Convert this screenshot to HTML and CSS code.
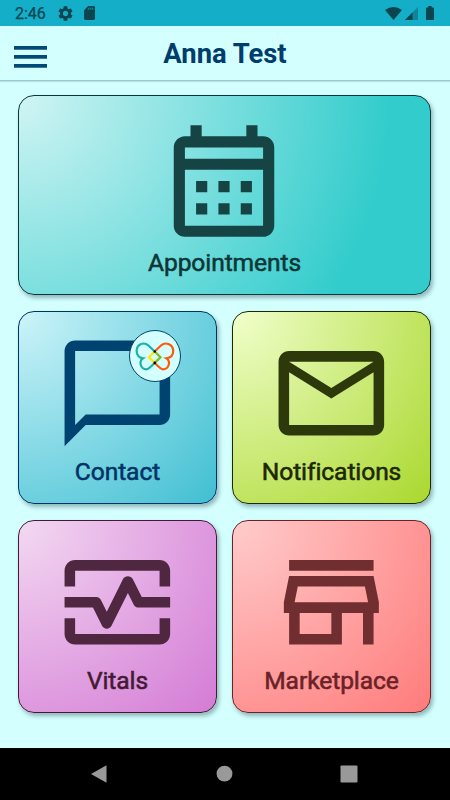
FILE: index.html
```html
<!DOCTYPE html>
<html lang="en">
<head>
<meta charset="utf-8">
<title>Anna Test</title>
<link rel="stylesheet" href="styles.css">
</head>
<body>
<div class="status">
  <span class="clock">2:46</span>
  <svg class="gear" viewBox="2 2 20 20"><path d="M19.14 12.94c.04-.3.06-.61.06-.94 0-.32-.02-.64-.07-.94l2.03-1.58c.18-.14.23-.41.12-.61l-1.92-3.32c-.12-.22-.37-.29-.59-.22l-2.39.96c-.5-.38-1.03-.7-1.62-.94l-.36-2.54c-.04-.24-.24-.41-.48-.41h-3.84c-.24 0-.43.17-.47.41l-.36 2.54c-.59.24-1.13.57-1.62.94l-2.39-.96c-.22-.08-.47 0-.59.22L2.74 8.87c-.12.21-.08.47.12.61l2.03 1.58c-.05.3-.09.63-.09.94s.02.64.07.94l-2.03 1.58c-.18.14-.23.41-.12.61l1.92 3.32c.12.22.37.29.59.22l2.39-.96c.5.38 1.03.7 1.62.94l.36 2.54c.05.24.24.41.48.41h3.84c.24 0 .44-.17.47-.41l.36-2.54c.59-.24 1.13-.56 1.62-.94l2.39.96c.22.08.47 0 .59-.22l1.92-3.32c.12-.22.07-.47-.12-.61l-2.01-1.58zM12 15.6c-1.98 0-3.6-1.62-3.6-3.6s1.62-3.6 3.6-3.6 3.6 1.62 3.6 3.6-1.62 3.6-3.6 3.6z"/></svg>
  <svg class="sd" viewBox="4 2 16 20" preserveAspectRatio="none"><path d="M18 2h-8L4 8v12c0 1.100.9 2 2 2h12c1.100 0 2-.9 2-2V4c0-1.100-.9-2-2-2z"/><path class="pins" d="M9.500 4.500h2v3h-2zM12.500 4.500h2v3h-2zM15.500 4.500h2v3h-2z"/></svg>
  <span class="spacer"></span>
  <svg class="wifi" viewBox="0 0 17 13"><path d="M0 3Q8.500-3 17 3L8.500 13z"/></svg>
  <svg class="cell" viewBox="0 0 13 13"><path class="dim" d="M0 13L13 0v13z"/><path d="M0 13L7.500 5.500V13z"/></svg>
  <svg class="battery" viewBox="0 0 8 14"><path d="M2.300 0h3.400v1.500H7.200q.8 0 .8.8v10.900q0 .8-.8.8H.8q-.8 0-.8-.8V2.300q0-.8.8-.8h1.500z"/></svg>
</div>
<header class="topbar">
  <div class="burger"><i></i><i></i><i></i></div>
  <h1 class="title">Anna Test</h1>
</header>
<main class="tiles">
  <section class="tile appointments">
    <svg class="icon" viewBox="0 0 24 24"><path d="M7 12h2v2H7v-2m14-6v14c0 1.100-.9 2-2 2H5a2 2 0 0 1-2-2V6c0-1.100.9-2 2-2h1V2h2v2h8V2h2v2h1a2 2 0 0 1 2 2M5 8h14V6H5v2m14 12V10H5v10h14m-4-6v-2h2v2h-2m-4 0v-2h2v2h-2m-4 2h2v2H7v-2m8 2v-2h2v2h-2m-4 0v-2h2v2h-2"/></svg>
    <span class="label">Appointments</span>
  </section>
  <section class="tile contact">
    <svg class="icon" viewBox="0 0 24 24"><path d="M20 2H4c-1.100 0-2 .9-2 2v18l4-4h14c1.100 0 2-.9 2-2V4c0-1.100-.9-2-2-2zm0 14H6l-2 2V4h16v12z"/></svg>
    <span class="label">Contact</span>
    <div class="badge">
      <svg viewBox="0 0 52 52"><g fill="none" stroke-width="2.200">
        <path stroke="#1cb0a8" d="M25.700 21.500L19.200 15.300C14.500 11.300 7.600 14.700 7.600 21.100C7.600 25.300 10.500 28 14 28.300C9.400 31.500 11.500 39.300 17.500 39.300C19.500 39.300 20.300 38.300 25.700 32.900"/>
        <path stroke="#ff5a0a" d="M25.700 21.500L32.200 15.300C36.900 11.300 44.200 14.700 44.200 21.100C44.200 25.300 41.500 28 37.400 28.300C42.200 31.500 39.900 39.300 33.900 39.300C31.900 39.300 31.100 38.300 25.700 32.900"/>
        <path stroke="#ffe600" d="M25.700 21.500L19.900 27.300L25.700 32.900"/>
        <path stroke="#84b81c" d="M25.700 21.500L31.500 27.300L25.700 32.900"/></g>
        <circle cx="25.700" cy="21.500" r="1.300"/><circle cx="25.700" cy="32.900" r="1.300"/>
      </svg>
    </div>
  </section>
  <section class="tile notifications">
    <svg class="icon" viewBox="0 0 24 24"><path d="M22 6c0-1.100-.9-2-2-2H4c-1.100 0-2 .9-2 2v12c0 1.100.9 2 2 2h16c1.100 0 2-.9 2-2V6zm-2 0l-8 5-8-5h16zm0 12H4V8l8 5 8-5v10z"/></svg>
    <span class="label">Notifications</span>
  </section>
  <section class="tile vitals">
    <svg class="icon" viewBox="0 0 24 24"><path d="M20 4H4c-1.100 0-2 .9-2 2v3h2V6h16v3h2V6c0-1.100-.9-2-2-2zM20 18H4v-3H2v3c0 1.100.9 2 2 2h16c1.100 0 2-.9 2-2v-3h-2v3z"/><path d="M14.890 7.550c-.34-.68-1.450-.68-1.790 0L10 13.760l-1.110-2.210C8.720 11.210 8.380 11 8 11H2v2h5.380l1.720 3.450c.18.34.52.55.9.55s.72-.21.89-.55L14 10.240l1.110 2.210c.17.34.51.55.89.55h6v-2h-5.380l-1.730-3.450z"/></svg>
    <span class="label">Vitals</span>
  </section>
  <section class="tile marketplace">
    <svg class="icon" viewBox="0 0 24 24"><path d="M18.360 9l.6 3H5.040l.6-3h12.720M20 4H4v2h16V4zm0 3H4l-1 5v2h1v6h10v-6h4v6h2v-6h1v-2l-1-5zM6 18v-4h6v4H6z"/></svg>
    <span class="label">Marketplace</span>
  </section>
</main>
<nav class="navbar">
  <svg viewBox="0 0 18 18"><path d="M16.500 .2v17.600L1 9z"/></svg>
  <svg viewBox="0 0 18 18"><circle cx="9.500" cy="8.700" r="7.900"/></svg>
  <svg viewBox="0 0 18 18"><rect x=".5" y=".4" width="17" height="17" rx="1.200"/></svg>
</nav>
</body>
</html>
```
FILE: styles.css
```css
* { box-sizing: border-box; }
body {
  margin: 0;
  width: 450px;
  height: 800px;
  display: flex;
  flex-direction: column;
  overflow: hidden;
  background: #d4ffff;
  font-family: Roboto, "Liberation Sans", sans-serif;
}
svg { display: block; flex: none; }
.status {
  height: 26px;
  flex: none;
  display: flex;
  align-items: center;
  padding: 0 16px 0 15px;
  background: #15aec9;
  fill: #09464f;
  color: #09464f;
}
.clock { font-size: 16px; line-height: 20px; padding-top: 2px; width: 43px; -webkit-text-stroke: .25px; }
.gear { width: 15px; height: 15px; }
.sd { width: 11px; height: 14px; margin-left: 11px; }
.pins { fill: #15aec9; opacity: .6; }
.spacer { flex: 1; }
.wifi { width: 17px; height: 13px; }
.cell { width: 13px; height: 13px; margin: 1px 8px 0 3px; }
.dim { opacity: .4; }
.battery { width: 8px; height: 14px; }
.topbar {
  height: 55px;
  flex: none;
  display: grid;
  grid-template-columns: 48px 1fr 48px;
  align-items: center;
  border-bottom: 1px solid #a2c4cd;
  box-shadow: 0 1px 1px rgba(0, 40, 60, .12);
}
.burger { display: flex; flex-direction: column; gap: 5px; padding: 7px 0 0 14px; }
.burger i { display: block; width: 33px; height: 4px; background: #004a77; border: solid #3c7898; border-width: 0 0 1px; }
.title {
  margin: 0;
  padding-top: 1px;
  text-align: center;
  font-size: 27.400px;
  line-height: 32px;
  font-weight: 700;
  color: #003c6c;
}
.tiles {
  flex: 1;
  display: grid;
  grid-template-columns: 199px 199px;
  grid-template-rows: 200px 193px 193px;
  gap: 16px 15px;
  padding: 14px 0 0 18px;
}
.tile {
  position: relative;
  display: flex;
  flex-direction: column;
  align-items: center;
  padding-top: 18px;
  border: 1px solid;
  border-radius: 16px;
  box-shadow: 2px 3px 4px rgba(0, 30, 40, .32);
}
.icon { width: 126.700px; height: 126.700px; }
.label { font-size: 24.600px; letter-spacing: -.1px; line-height: 30px; font-weight: 400; -webkit-text-stroke: .55px; }
.appointments {
  grid-column: 1 / 3;
  color: #0c3637;
  fill: #164444;
  background: radial-gradient(circle 370px at 0 0, #d0f5f4, #33cccc);
}
.appointments .icon { width: 134px; height: 134px; margin-right: 1px; }
.contact {
  color: #003365;
  fill: #004371;
  background: radial-gradient(circle at 0 0, #cdf4f9, #40bfd2);
}
.notifications {
  color: #1d2803;
  fill: #2d380b;
  background: radial-gradient(circle at 0 0, #f1ffcc, #aad82e);
}
.vitals {
  color: #431a34;
  fill: #4f2740;
  background: radial-gradient(circle at 0 0, #f3d9f2, #d47bd5);
}
.marketplace {
  color: #6a2226;
  fill: #702e30;
  background: radial-gradient(circle at 0 0, #ffcccc, #ff7b7b);
}
.badge {
  position: absolute;
  left: 110px;
  top: 18px;
  width: 52px;
  height: 52px;
  border: 1px solid #004371;
  border-radius: 50%;
  background: #d4ffff;
  fill: #000;
}
.badge svg { width: 52px; height: 52px; margin: -1px; }
.navbar {
  height: 52px;
  flex: none;
  display: flex;
  justify-content: space-between;
  padding: 17px 92px 0 90px;
  background: #000;
  fill: #999;
}
.navbar svg { width: 18px; height: 18px; }
```
